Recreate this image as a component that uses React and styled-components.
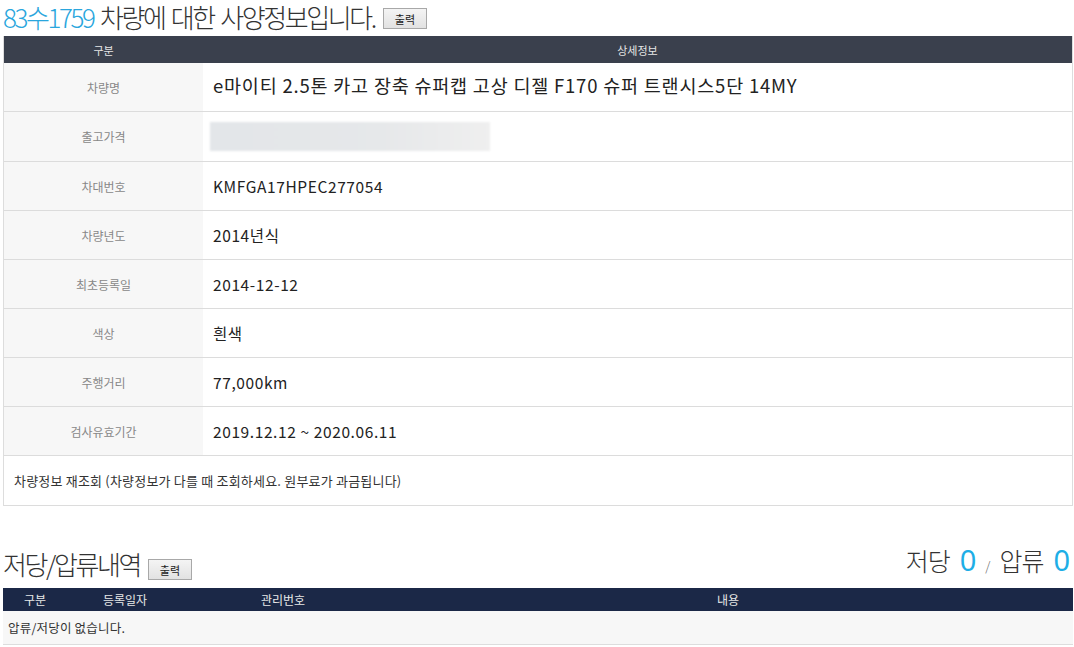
import React from "react";
import styled, { createGlobalStyle } from "styled-components";

const Global = createGlobalStyle`
  html, body { margin: 0; padding: 0; background: #fff; }
  body { font-family: "Noto Sans CJK KR", "Noto Sans", sans-serif; color: #333; }
`;

const Page = styled.div`
  padding: 0 1px 0 3px;
  width: 1070px;
`;

const TitleRow = styled.div`
  display: flex;
  align-items: flex-end;
  justify-content: space-between;
  height: ${(p) => p.$h}px;
  padding-bottom: ${(p) => p.$pb || 0}px;
  box-sizing: border-box;
`;

const TitleLeft = styled.div`
  display: flex;
  align-items: flex-end;
  gap: 8px;
`;

const Title = styled.h2`
  margin: 0;
  font-size: 26px;
  line-height: 30px;
  font-weight: 300;
  letter-spacing: -2.4px;
  word-spacing: 3px;
  color: #333;
  padding-top: 2px;
`;

const Blue = styled.span`
  color: #2aa6dd;
`;

const PrintBtn = styled.button`
  width: 44px;
  height: 21px;
  padding: 0;
  margin-bottom: ${(p) => p.$mb || 0}px;
  font-family: "Noto Sans CJK KR", sans-serif;
  font-size: 11px;
  color: #222;
  background: linear-gradient(#f4f4f4, #e2e2e2);
  border: 1px solid #a8a8a8;
  border-radius: 0;
`;

const SpecTable = styled.div`
  border-left: 1px solid #ddd;
  border-right: 1px solid #ddd;
  margin-top: 4px;
`;

const SpecHead = styled.div`
  display: grid;
  grid-template-columns: 199px 1fr;
  height: 27px;
  background: #3a404d;
  color: #e6e6e6;
  font-size: 11px;
  align-items: center;
  text-align: center;
`;

const SpecRow = styled.div`
  display: grid;
  grid-template-columns: 199px 1fr;
  height: ${(p) => (p.$tall ? 50 : 49)}px;
  border-bottom: 1px solid #dcdcdc;
  box-sizing: border-box;
`;

const Label = styled.div`
  background: #f7f7f7;
  color: #888;
  font-size: 12px;
  display: flex;
  align-items: center;
  justify-content: center;
`;

const Value = styled.div`
  display: flex;
  align-items: center;
  padding-left: 10px;
  padding-bottom: ${(p) => (p.$big ? 4 : 0)}px;
  font-size: ${(p) => (p.$big ? 18.5 : 15.5)}px;
  letter-spacing: ${(p) => (p.$big ? 0.8 : 0.6)}px;
  color: #222;
`;

const Blur = styled.div`
  width: 280px;
  height: 29px;
  margin-left: -3px;
  background: linear-gradient(90deg, #e3e6e9 0%, #e6e8ea 60%, #efefef 100%);
  filter: blur(1px);
`;

const FootRow = styled.div`
  height: 49px;
  display: flex;
  align-items: center;
  padding-left: 10px;
  font-size: 13px;
  letter-spacing: 0.2px;
  color: #333;
  border-bottom: 1px solid #dcdcdc;
`;

const Counts = styled.div`
  display: flex;
  align-items: baseline;
  gap: 10px;
  font-size: 25px;
  font-weight: 300;
  color: #333;
  letter-spacing: -1px;
  padding-right: 4px;
`;

const Num = styled.span`
  color: #1eaee6;
  font-size: 29px;
  font-family: "Noto Sans", sans-serif;
  font-weight: 400;
`;

const Slash = styled.span`
  font-size: 13px;
  color: #666;
`;

const LienHead = styled.div`
  display: grid;
  grid-template-columns: 64px 116px 200px 1fr;
  height: 23px;
  background: #1b2847;
  color: #e8e8e8;
  font-size: 12px;
  align-items: center;
  text-align: center;
`;

const LienRow = styled.div`
  height: 33px;
  background: #f7f7f7;
  border-bottom: 1px solid #ddd;
  display: flex;
  align-items: center;
  padding-left: 5px;
  font-size: 12.5px;
  letter-spacing: 0.2px;
  color: #333;
`;

const specs = [
  ["차량명", "e마이티 2.5톤 카고 장축 슈퍼캡 고상 디젤 F170 슈퍼 트랜시스5단 14MY", true],
  ["출고가격", null],
  ["차대번호", "KMFGA17HPEC277054"],
  ["차량년도", "2014년식"],
  ["최초등록일", "2014-12-12"],
  ["색상", "흰색"],
  ["주행거리", "77,000km"],
  ["검사유효기간", "2019.12.12 ~ 2020.06.11"],
];

export default function App() {
  return (
    <Page>
      <Global />
      <TitleRow $h={32}>
        <TitleLeft>
          <Title>
            <Blue>83수1759</Blue> 차량에 대한 사양정보입니다.
          </Title>
          <PrintBtn $mb={3}>출력</PrintBtn>
        </TitleLeft>
      </TitleRow>
      <SpecTable>
        <SpecHead>
          <div>구분</div>
          <div>상세정보</div>
        </SpecHead>
        {specs.map(([k, v, big], i) => (
          <SpecRow key={k} $tall={i === 1}>
            <Label>{k}</Label>
            <Value $big={big}>{v === null ? <Blur /> : v}</Value>
          </SpecRow>
        ))}
        <FootRow>차량정보 재조회 (차량정보가 다를 때 조회하세요. 원부료가 과금됩니다)</FootRow>
      </SpecTable>
      <TitleRow $h={82} $pb={9}>
        <TitleLeft>
          <Title>저당/압류내역</Title>
          <PrintBtn $mb={-1}>출력</PrintBtn>
        </TitleLeft>
        <Counts>
          저당 <Num>0</Num> <Slash>/</Slash> 압류 <Num>0</Num>
        </Counts>
      </TitleRow>
      <LienHead>
        <div>구분</div>
        <div>등록일자</div>
        <div>관리번호</div>
        <div>내용</div>
      </LienHead>
      <LienRow>압류/저당이 없습니다.</LienRow>
    </Page>
  );
}
